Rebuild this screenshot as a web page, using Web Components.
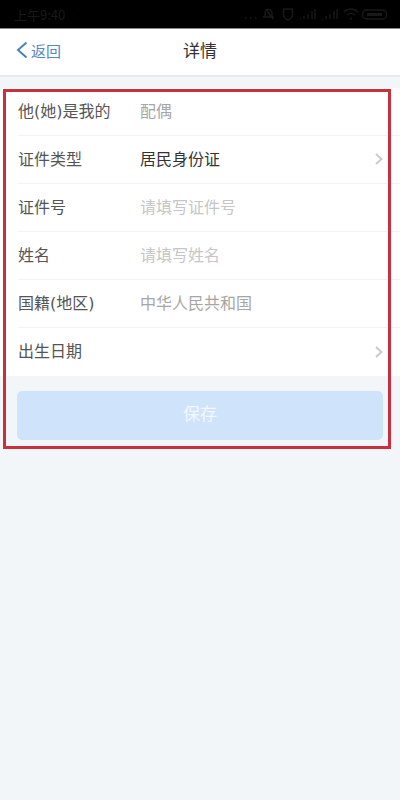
<!DOCTYPE html>
<html lang="zh">
<head>
<meta charset="utf-8">
<style>
html, body { margin: 0; padding: 0; height: 100%; }
body { width: 400px; height: 800px; overflow: hidden; background: #f3f6f9; font-family: "DejaVu Sans", "Noto Sans CJK SC", sans-serif; }
</style>
</head>
<body>
<status-bar></status-bar>
<nav-bar title="详情" back="返回"></nav-bar>
<detail-form>
	<form-row label="他(她)是我的" value="配偶" kind="muted"></form-row>
	<form-row label="证件类型" value="居民身份证" kind="dark" arrow></form-row>
	<form-row label="证件号" value="请填写证件号" kind="hint"></form-row>
	<form-row label="姓名" value="请填写姓名" kind="hint"></form-row>
	<form-row label="国籍(地区)" value="中华人民共和国" kind="muted"></form-row>
	<form-row label="出生日期" arrow last></form-row>
	<save-button slot="action">保存</save-button>
</detail-form>
<script>
class StatusBar extends HTMLElement {
	constructor() {
		super();
		this.attachShadow({mode: 'open'}).innerHTML = `
<style>
:host { display: flex; align-items: center; justify-content: space-between; height: 29px; background: #000; border-bottom: 1px solid #8a8a8a; color: #191919; padding: 0 12px 0 14px; box-sizing: border-box; font-family: "Noto Sans CJK SC", sans-serif; font-size: 13px; }
svg { display: block; }
</style>
<span>上午9:40</span>
<svg width="150" height="14" viewBox="0 0 150 14" fill="none" stroke="#191919" stroke-width="1.4">
	<path d="M7 11h1.500M12 11h1.500M17 11h1.500"/>
	<path d="M27 10V6a3.500 3.500 0 0 1 7 0v4M25 10h11M28 2l7 10"/>
	<path d="M45.500 2h9v6c0 2-2 4-4.500 5-2.500-1-4.500-3-4.500-5z"/>
	<path d="M62 12h1M66 12V9M70 12V7M74 12V4M77 12V2M84 12h1M88 12V9M92 12V7M96 12V4M99 12V2"/>
	<path d="M106 5c4-4 10-4 14 0M109 8c2.500-2 5.500-2 8 0M112 11l1 1 1-1"/>
	<rect x="124.500" y="3" width="24" height="9" rx="4"/>
	<path d="M129 7.500h15" stroke-width="3"/>
</svg>`;
	}
}
customElements.define('status-bar', StatusBar);

class NavBar extends HTMLElement {
	constructor() {
		super();
		this.attachShadow({mode: 'open'}).innerHTML = `
<style>
:host { display: grid; grid-template-columns: 1fr auto 1fr; align-items: center; height: 48px; box-sizing: border-box; background: #fff; border-bottom: 2px solid #e9e9e9; padding-bottom: 2px; }
.back { display: flex; align-items: center; gap: 3px; padding: 0 0 2px 16px; color: #5587c4; font-size: 15px; }
.title { padding-bottom: 4px; color: #333; font-size: 17px; }
svg { display: block; }
</style>
<div class="back">
	<svg width="12" height="18" viewBox="0 0 12 18" fill="none" stroke="#4a80c4" stroke-width="2"><path d="M10.500 1.500 2 9l8.500 7.500"/></svg>
	<span>${this.getAttribute('back')}</span>
</div>
<div class="title">${this.getAttribute('title')}</div>`;
	}
}
customElements.define('nav-bar', NavBar);

class DetailForm extends HTMLElement {
	constructor() {
		super();
		this.attachShadow({mode: 'open'}).innerHTML = `
<style>
:host { display: block; position: relative; margin-top: 11px; }
.rows { display: block; background: #fff; }
.action { display: block; padding: 15px 17px 0; }
.frame { position: absolute; left: 3px; top: 1px; width: 388px; height: 360px; box-sizing: border-box; border: 3px solid #c8303f; pointer-events: none; }
</style>
<div class="rows"><slot></slot></div>
<div class="action"><slot name="action"></slot></div>
<div class="frame"></div>`;
	}
}
customElements.define('detail-form', DetailForm);

class FormRow extends HTMLElement {
	constructor() {
		super();
		const value = this.getAttribute('value') || '';
		const arrow = this.hasAttribute('arrow') ? `<svg width="8" height="12" viewBox="0 0 8 12" fill="none" stroke="#c9c9c9" stroke-width="1.800"><path d="M1 1l5.500 5L1 11"/></svg>` : '';
		this.attachShadow({mode: 'open'}).innerHTML = `
<style>
:host { display: block; padding-left: 18px; }
.row { display: flex; align-items: center; height: 48px; box-sizing: border-box; padding: 0 17px 4px 0; border-bottom: 1px solid #f2f2f2; font-size: 16px; }
:host([last]) .row { border-bottom: 0; }
.label { width: 122px; color: #555; flex: none; }
.value { flex: 1; }
:host([kind=muted]) .value { color: #a6a6a6; }
:host([kind=hint]) .value { color: #c6c6c6; }
:host([kind=dark]) .value { color: #333; }
svg { display: block; flex: none; margin-top: 3px; }
</style>
<div class="row">
	<span class="label">${this.getAttribute('label')}</span>
	<span class="value">${value}</span>
	${arrow}
</div>`;
	}
}
customElements.define('form-row', FormRow);

class SaveButton extends HTMLElement {
	constructor() {
		super();
		this.attachShadow({mode: 'open'}).innerHTML = `
<style>
:host { display: flex; align-items: center; justify-content: center; height: 49px; box-sizing: border-box; padding-bottom: 7px; border-radius: 5px; background: #cfe4fa; color: #f2f7fd; font-size: 17px; }
</style>
<slot></slot>`;
	}
}
customElements.define('save-button', SaveButton);
</script>
</body>
</html>
